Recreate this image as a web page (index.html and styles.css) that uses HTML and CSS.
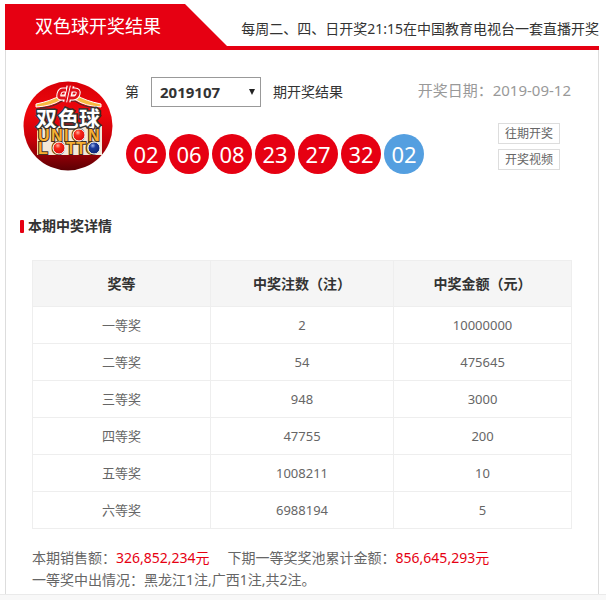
FILE: index.html
```html
<!DOCTYPE html>
<html lang="zh-CN">

<head>
    <meta charset="UTF-8">
    <meta name="viewport" content="width=device-width, initial-scale=1.0">
    <title>双色球开奖结果</title>
    <link rel="stylesheet" href="styles.css">
</head>

<body>
    <div class="wrap">
        <div class="head">
            <h1 class="head-title">双色球开奖结果</h1>
            <p class="head-tip">每周二、四、日开奖21:15在中国教育电视台一套直播开奖</p>
        </div>

        <div class="result">
            <svg class="logo" viewBox="0 0 90 90" role="img" aria-label="双色球">
                <defs>
                    <linearGradient id="ball" x1="0" y1="0" x2="0" y2="1">
                        <stop offset="0" stop-color="#d80008" />
                        <stop offset="0.35" stop-color="#f0060c" />
                        <stop offset="0.65" stop-color="#c80008" />
                        <stop offset="1" stop-color="#5c0004" />
                    </linearGradient>
                    <radialGradient id="red" cx="0.4" cy="0.3" r="0.6">
                        <stop offset="0" stop-color="#ffb0a0" />
                        <stop offset="0.4" stop-color="#f82818" />
                        <stop offset="1" stop-color="#e01010" />
                    </radialGradient>
                    <radialGradient id="blue" cx="0.4" cy="0.3" r="0.6">
                        <stop offset="0" stop-color="#a0b8f0" />
                        <stop offset="0.4" stop-color="#1c3c9c" />
                        <stop offset="1" stop-color="#102878" />
                    </radialGradient>
                </defs>
                <circle cx="45" cy="45" r="44.5" fill="url(#ball)" />
                <!-- 屋顶 -->
                <path d="M13 23Q28 20 38 14H53Q63 20 78 23V26Q62 25 53 19H38Q29 25 13 26Z" fill="#f8b840" stroke="#fff" stroke-width="1" />
                <path d="M17 27Q31 26 39 20H52Q60 26 74 27" fill="none" stroke="#333" stroke-width="1" />
                <!-- 中国福利彩票标志 -->
                <g fill="none" stroke="#fff" stroke-width="5">
                    <path d="M43 9H40Q37 9 36 13Q35 17 38 17H42M48 9H52Q56 9 55 13Q54 17 50 17H47" />
                    <path d="M46 5L42 21M49 5L45 21" />
                </g>
                <g fill="none" stroke="#e01018" stroke-width="3">
                    <path d="M43 9H40Q37 9 36 13Q35 17 38 17H42M48 9H52Q56 9 55 13Q54 17 50 17H47" />
                    <path d="M46 4L42 22M49 4L45 22" stroke-width="2" />
                </g>
                <path d="M14 45H79V74H14Z" fill="#f4e8d8" />
                <text class="logo-cn" x="13 35 56" y="45">双色球</text>
                <text class="logo-en" x="15 28 41 49 65" y="60">UNION</text>
                <text class="logo-en" x="15 29 43 53 63" y="73">LOTTO</text>
                <circle cx="56" cy="54" r="6" fill="url(#red)" stroke="#fff" />
                <circle cx="36" cy="67" r="6" fill="url(#red)" stroke="#fff" />
                <circle cx="71" cy="67" r="6" fill="url(#blue)" stroke="#fff" />
            </svg>

            <div class="info">
                <div class="row">
                    <div class="issue">
                        <label for="issue">第</label>
                        <span class="select">
                            <select id="issue">
                                <option>2019107</option>
                            </select>
                            <svg class="arrow" viewBox="0 0 6 6"><path d="M0 0H6L3 6Z" fill="#222" /></svg>
                        </span>
                        <span>期开奖结果</span>
                    </div>
                    <p class="date">开奖日期：2019-09-12</p>
                </div>
                <div class="row row-balls">
                    <ul class="balls">
                        <li>02</li>
                        <li>06</li>
                        <li>08</li>
                        <li>23</li>
                        <li>27</li>
                        <li>32</li>
                        <li class="blue">02</li>
                    </ul>
                    <div class="links">
                        <a href="#">往期开奖</a>
                        <a href="#">开奖视频</a>
                    </div>
                </div>
            </div>
        </div>

        <h2 class="sub-title">本期中奖详情</h2>

        <div class="detail">
            <table>
                <thead>
                    <tr>
                        <th class="col-level">奖等</th>
                        <th class="col-count">中奖注数（注）</th>
                        <th>中奖金额（元）</th>
                    </tr>
                </thead>
                <tbody>
                    <tr>
                        <td>一等奖</td>
                        <td>2</td>
                        <td>10000000</td>
                    </tr>
                    <tr>
                        <td>二等奖</td>
                        <td>54</td>
                        <td>475645</td>
                    </tr>
                    <tr>
                        <td>三等奖</td>
                        <td>948</td>
                        <td>3000</td>
                    </tr>
                    <tr>
                        <td>四等奖</td>
                        <td>47755</td>
                        <td>200</td>
                    </tr>
                    <tr>
                        <td>五等奖</td>
                        <td>1008211</td>
                        <td>10</td>
                    </tr>
                    <tr>
                        <td>六等奖</td>
                        <td>6988194</td>
                        <td>5</td>
                    </tr>
                </tbody>
            </table>
            <div class="summary">
                <p class="summary-row">
                    <span>本期销售额：<em>326,852,234元</em></span>
                    <span>下期一等奖奖池累计金额：<em>856,645,293元</em></span>
                </p>
                <p>一等奖中出情况：黑龙江1注,广西1注,共2注。</p>
            </div>
        </div>
    </div>
</body>

</html>
```
FILE: styles.css
```css
* {
    box-sizing: border-box;
}

html {
    background: #f8f8f8;
}

body {
    margin: 0;
    padding: 4px 7px 0 5px;
    background: #fff;
    border-bottom: 1px solid #eaeaea;
    color: #333;
    font: 14px/22px "Noto Sans", "Noto Sans CJK SC", sans-serif;
}

h1,
h2,
p,
ul {
    margin: 0;
    padding: 0;
}

li {
    list-style: none;
}

a {
    text-decoration: none;
}

em {
    color: #e60012;
    font-style: normal;
}

.head {
    display: flex;
    justify-content: space-between;
    height: 46px;
    border-bottom: 4px solid #e60012;
}

.head-title {
    width: 222px;
    padding-left: 30px;
    background: #e60012;
    clip-path: polygon(0 0, 180px 0, 100% 100%, 0 100%);
    color: #fff;
    font-size: 18px;
    font-weight: normal;
    line-height: 44px;
}

.head-tip {
    line-height: 50px;
    white-space: nowrap;
}

.result {
    display: flex;
    padding: 27px 27px 0 17px;
    border: solid #ddd;
    border-width: 0 1px;
}

.logo {
    flex: none;
    width: 90px;
    height: 90px;
    margin-top: 4px;
}

.logo-cn,
.logo-en {
    font-weight: bold;
    paint-order: stroke;
}

.logo-cn {
    font-size: 21px;
    fill: #fff;
    stroke: #333;
    stroke-width: 3px;
}

.logo-en {
    font-family: "Liberation Sans", sans-serif;
    font-size: 16px;
    fill: #f8b030;
    stroke: #443020;
    stroke-width: 2px;
}

.info {
    flex: 1;
    margin-left: 12px;
}

.row {
    display: flex;
    justify-content: space-between;
}

.row-balls {
    padding: 16px 11px 0 1px;
}

.issue {
    display: flex;
    align-items: center;
    gap: 12px;
}

.select {
    position: relative;
}

.select select {
    display: block;
    width: 110px;
    height: 30px;
    padding: 0 8px;
    appearance: none;
    border: 1px solid #999;
    border-radius: 0;
    background: #fff;
    color: #333;
    font: bold 15px "Noto Sans", sans-serif;
}

.arrow {
    position: absolute;
    top: 12px;
    right: 6px;
    width: 6px;
    height: 6px;
    pointer-events: none;
}

.balls {
    display: flex;
    gap: 3px;
    padding-top: 11px;
}

.balls li {
    width: 40px;
    height: 40px;
    border-radius: 50%;
    background: #e60012;
    color: #fff;
    font-size: 22px;
    line-height: 40px;
    text-align: center;
}

.balls .blue {
    background: #549fe0;
}

.date {
    padding-top: 2px;
    color: #999;
    font-size: 15px;
}

.links {
    display: flex;
    flex-direction: column;
    gap: 5px;
}

.links a {
    padding: 0 6px;
    border: 1px solid #ddd;
    color: #666;
    font-size: 12px;
    line-height: 19px;
}

.sub-title {
    display: flex;
    align-items: center;
    gap: 4px;
    padding: 41px 0 0 14px;
    border: solid #ddd;
    border-width: 0 1px;
    font-size: 14px;
}

.sub-title::before {
    content: "";
    width: 4px;
    height: 13px;
    border-radius: 1px;
    background: #e60012;
}

.detail {
    padding: 23px 26px 3px;
    border: solid #ddd;
    border-width: 0 1px;
    color: #666;
}

table {
    width: 100%;
    border-collapse: collapse;
    table-layout: fixed;
    text-align: center;
}

th,
td {
    padding: 0;
    border: 1px solid #eee;
}

th {
    height: 46px;
    background: #f5f5f5;
    color: #333;
}

td {
    height: 37px;
    font-size: 13px;
}

.col-level {
    width: 33%;
}

.col-count {
    width: 34%;
}

.summary {
    padding-top: 18px;
}

.summary-row {
    display: flex;
    gap: 18px;
}
```
